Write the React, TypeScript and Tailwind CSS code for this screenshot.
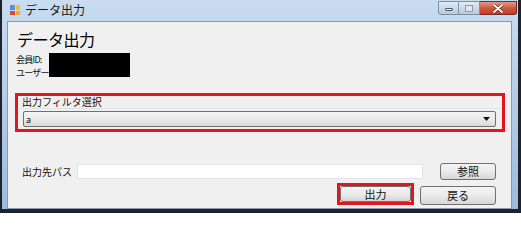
import React from "react";

const font = { fontFamily: '"Noto Sans CJK JP", "Noto Sans", sans-serif' };

const WinButton = ({
  children,
  className = "",
}: {
  children: React.ReactNode;
  className?: string;
}) => (
  <button
    type="button"
    className={
      "flex items-center justify-center rounded-[3px] border border-[#707070] bg-gradient-to-b from-[#f3f3f3] via-[#ebebeb] to-[#d6d6d6] text-[11px] leading-none text-[#111] " +
      className
    }
  >
    {children}
  </button>
);

const TitleBar = () => (
  <div className="-mr-[5px] flex h-[20px] items-start">
    {/* app icon */}
    <div className="ml-[3px] mt-[5px] grid h-[10px] w-[10px] grid-cols-2 gap-[1px]">
      <div className="bg-[#5b8fd6]" />
      <div className="bg-[#f2c232]" />
      <div className="bg-[#d94a3a]" />
      <div className="bg-[#f5a623]" />
    </div>
    <span className="ml-[5px] mt-[3px] text-[12px] leading-[14px] text-[#1a1a1a]">
      データ出力
    </span>
    <div className="ml-auto mt-[1px] flex h-[14px]">
      <div className="flex w-[21px] items-end justify-center rounded-bl-[3px] border border-[#7d8da2] bg-gradient-to-b from-[#e3ebf5] to-[#b9c9dc] pb-[3px]">
        <div className="h-[3px] w-[8px] rounded-[1px] border border-[#4a5568] bg-white" />
      </div>
      <div className="flex w-[21px] items-center justify-center border-y border-r border-[#7d8da2] bg-gradient-to-b from-[#e3ebf5] to-[#b9c9dc]">
        <div className="h-[7px] w-[8px] border border-[#8c9ab0] bg-[#dfe8f3]" />
      </div>
      <div className="flex w-[37px] items-center justify-center rounded-br-[3px] border-y border-r border-[#7a2a22] bg-gradient-to-b from-[#e49a88] via-[#d0583f] to-[#c0392b]">
        <svg width="10" height="9" viewBox="0 0 10 9">
          <path
            d="M1 1 L9 8 M9 1 L1 8"
            stroke="#4a1b14"
            strokeWidth="3"
            strokeLinecap="round"
          />
          <path
            d="M1 1 L9 8 M9 1 L1 8"
            stroke="#ffffff"
            strokeWidth="1.8"
            strokeLinecap="round"
          />
        </svg>
      </div>
    </div>
  </div>
);

export default function App() {
  return (
    <div
      className="h-[213px] w-[521px] overflow-hidden bg-[#1d222c] pl-[2px] pr-[3px] pb-[4px]"
      style={font}
    >
      <div className="flex h-full flex-col bg-gradient-to-b from-[#c9dcf0] via-[#b3cbe6] to-[#9dbbdf] px-[5px] pr-[6px]">
        <TitleBar />

        <div className="mt-[1px] flex flex-1 flex-col border border-[#8c9aab] bg-[#f0f0f0] text-[11px] text-[#111]">
          {/* heading */}
          <h1 className="ml-[9px] mt-[8px] text-[16px] leading-[18px] tracking-[-0.5px] text-[#000]">
            データ出力
          </h1>

          {/* member info (redacted) */}
          <div className="ml-[8px] mt-[4px] flex h-[26px]">
            <div className="w-[33px] whitespace-nowrap pt-[1px] text-[9px] leading-[13px] tracking-[-0.75px]">
              <div>会員ID:</div>
              <div>ユーザー</div>
            </div>
            <div className="mt-[1px] h-[24px] w-[81px] bg-black" />
          </div>

          {/* filter selection */}
          <div className="ml-[7px] mt-[15px] w-[490px] border-[3px] border-[#e3151d] pb-[2px]">
            <div className="border-b border-[#dfe4ea] pl-[4px] text-[10px] leading-[12px]">
              出力フィルタ選択
            </div>
            <div className="ml-[5px] mt-[2px] flex h-[16px] w-[473px] items-center rounded-[2px] border border-[#707070] bg-gradient-to-b from-[#f4f4f4] via-[#ebebeb] to-[#d9d9d9] pl-[2px] pr-[5px]">
              <span className="text-[9px] leading-none">a</span>
              <svg className="ml-auto" width="7" height="4" viewBox="0 0 7 4">
                <path d="M0 0 H7 L3.5 4 Z" fill="#111" />
              </svg>
            </div>
          </div>

          {/* output path */}
          <div className="mt-[31px] flex h-[17px] items-center">
            <span className="ml-[14px] w-[55px] text-[10px] leading-none">
              出力先パス
            </span>
            <div className="h-[15px] w-[346px] border border-[#e2e3ea] bg-white" />
            <WinButton className="ml-[17px] h-[17px] w-[56px]">参照</WinButton>
          </div>

          {/* actions */}
          <div className="mt-[3px] flex items-end">
            <div className="ml-[329px] h-[22px] w-[77px] border-[3px] border-[#e3151d]">
              <WinButton className="h-full w-full">出力</WinButton>
            </div>
            <WinButton className="ml-[6px] h-[19px] w-[76px]">戻る</WinButton>
          </div>
        </div>
      </div>
    </div>
  );
}
